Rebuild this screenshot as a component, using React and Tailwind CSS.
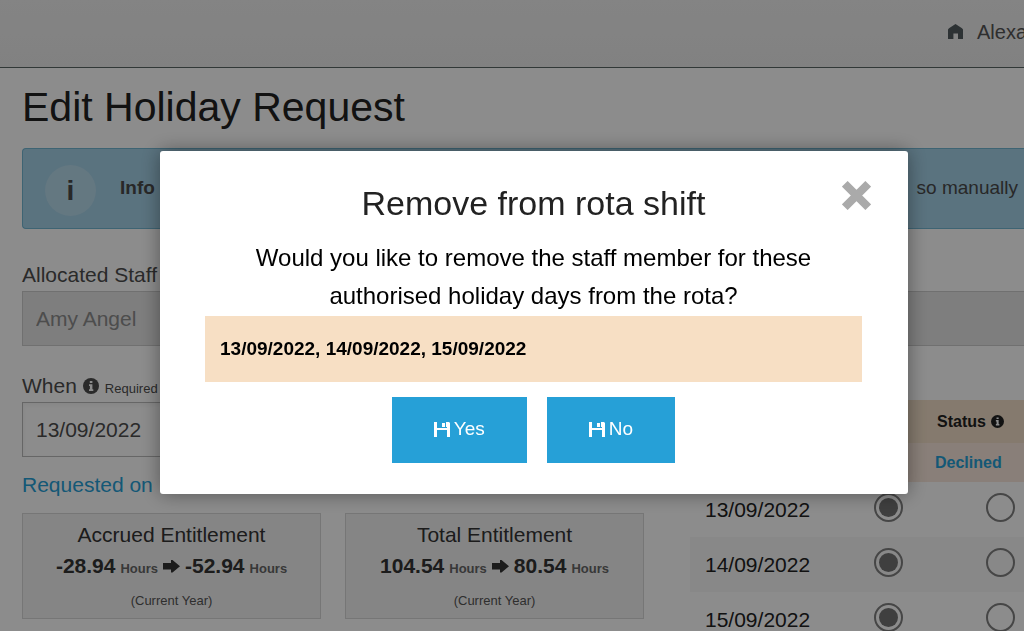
import React from "react";

const rotaDates = ["13/09/2022", "14/09/2022", "15/09/2022"];

const entitlements = [
  { title: "Accrued Entitlement", from: "-28.94", to: "-52.94" },
  { title: "Total Entitlement", from: "104.54", to: "80.54" },
];

function HomeIcon({ className }) {
  return (
    <svg viewBox="0 0 15 15" className={className} fill="currentColor" aria-hidden="true">
      <path d="M7.5 0 14 4.2l1 1.3V15h-5V9.4H5.4V15H0V5.5l1-1.3z" />
    </svg>
  );
}

function InfoIcon({ className }) {
  return (
    <svg viewBox="0 0 16 16" className={className} aria-hidden="true">
      <circle cx="8" cy="8" r="8" fill="currentColor" />
      <path d="M6.8 3h2.6v2H6.8zM6 6.2h3.4v5h.9V13H6v-1.8h.9V8H6z" fill="#fff" />
    </svg>
  );
}

function ArrowIcon({ className }) {
  return (
    <svg viewBox="0 0 17 13" className={className} fill="currentColor" aria-hidden="true">
      <path d="M0 3h8V0h1.5L17 6.2 9.5 12.5H8v-3H0z" />
    </svg>
  );
}

function SaveIcon({ className }) {
  return (
    <svg viewBox="0 0 16 15" className={className} fill="currentColor" aria-hidden="true">
      <path d="M0 0h3v6h10V5h-1V0h3l1 1v14h-3V8H3v7H0zM8 1h3v4H8z" />
    </svg>
  );
}

function CloseIcon({ className }) {
  return (
    <svg viewBox="0 0 29 29" className={className} stroke="currentColor" strokeWidth="8" aria-hidden="true">
      <path d="M2.8 2.8 26.2 26.2M26.2 2.8 2.8 26.2" />
    </svg>
  );
}

function EntitlementCard({ title, from, to }) {
  return (
    <div className="flex-1 h-[106px] pt-1 border border-[#d8d8d8] bg-[#f2f2f2] text-center text-[#333]">
      <h3 className="text-[21px] leading-[34px]">{title}</h3>
      <p className="flex items-baseline justify-center gap-[5px] text-[21px] leading-7 font-bold">
        {from} <small className="text-[13px] text-[#666]">Hours</small>
        <ArrowIcon className="h-[13px] w-[17px] shrink-0" />
        {to} <small className="text-[13px] text-[#666]">Hours</small>
      </p>
      <p className="mt-[10px] text-[13px] leading-4 text-[#555]">(Current Year)</p>
    </div>
  );
}

function StatusTable() {
  const radio =
    "block size-[29px] appearance-none rounded-full border-2 border-[#808080] p-[3px] bg-clip-content checked:bg-[#737373]";

  return (
    <table className="w-[346px] table-fixed border-collapse text-left">
      <colgroup>
        <col className="w-[122px]" />
        <col className="w-[112px]" />
        <col className="w-[112px]" />
      </colgroup>
      <thead className="text-base font-bold">
        <tr className="h-[43px] bg-[#f2dfc8] text-[#222]">
          <td />
          <td />
          <th className="pl-[13px]">
            <span className="flex items-center gap-[5px]">
              Status <InfoIcon className="size-[13px]" />
            </span>
          </th>
        </tr>
        <tr className="h-[39px] bg-[#fae8dc]">
          <td />
          <td />
          <th className="pl-[11px]">
            <a href="#declined" className="text-[#26a0d7]">Declined</a>
          </th>
        </tr>
      </thead>
      <tbody>
        {rotaDates.map((date) => (
          <tr key={date} className="h-[55px] even:bg-[#f7f7f7]">
            <td className="pl-[15px] text-[21px] text-[#222]">{date}</td>
            <td className="pl-[62px] pb-1">
              <input type="radio" name={date} defaultChecked aria-label={`${date} approved`} className={radio} />
            </td>
            <td className="pl-[62px] pb-1">
              <input type="radio" name={date} aria-label={`${date} declined`} className={radio} />
            </td>
          </tr>
        ))}
      </tbody>
    </table>
  );
}

function HolidayPage() {
  return (
    <div className="h-full overflow-hidden">
      <header className="flex h-[68px] items-center justify-end gap-[14px] overflow-hidden border-b border-[#5a6664] bg-linear-to-b from-[#f0f0f0] to-[#ececec] pb-1 text-xl text-[#555]">
        <HomeIcon className="size-[15px] text-[#525c60]" />
        <a href="#account" className="-mr-[3px]">Alexa</a>
      </header>

      <main className="pl-[22px]">
        <h1 className="flex h-20 items-center text-[41px] text-[#222]">Edit Holiday Request</h1>

        <div className="flex h-[81px] items-center rounded-l border border-r-0 border-[#72b6d2] bg-[#a4d1e7] pl-[22px] text-[19px] text-[#4a4a4a]">
          <span className="mt-1 flex size-[51px] items-center justify-center rounded-full bg-white/20 text-[28px] font-bold">i</span>
          <strong className="ml-6">Info</strong>
          <span className="ml-auto pr-[6px]">so manually</span>
        </div>

        <label htmlFor="staff" className="mt-[30px] block text-[21px] leading-8 text-[#4d4d4d]">Allocated Staff</label>
        <input
          id="staff"
          defaultValue="Amy Angel"
          disabled
          className="block h-[55px] w-full border border-r-0 border-[#ccc] bg-[#e5e5e5] px-[13px] text-[21px] text-[#8c8c8c]"
        />

        <div className="flex gap-[46px]">
          <section className="w-[622px] shrink-0">
            <label htmlFor="when" className="mt-6 flex h-8 items-baseline gap-[6px] text-[21px] leading-8 text-[#4d4d4d]">
              When
              <InfoIcon className="size-4 self-center" />
              <small className="text-[13px]">Required</small>
            </label>
            <input
              id="when"
              defaultValue="13/09/2022"
              className="block h-[55px] w-full border border-[#bbb] px-[13px] text-[21px] text-[#4d4d4d] shadow-inner"
            />
            <p className="py-3 text-[21px] leading-8 text-[#26a0d7]">Requested on</p>
            <div className="flex gap-6">
              {entitlements.map((item) => (
                <EntitlementCard key={item.title} {...item} />
              ))}
            </div>
          </section>

          <section className="min-w-0 flex-1 overflow-hidden pt-[54px]">
            <StatusTable />
          </section>
        </div>
      </main>
    </div>
  );
}

function RemoveShiftModal() {
  const button =
    "flex h-[66px] items-center justify-center gap-1 bg-[#26a0d7] px-[42px] pb-0.5 text-[19px] text-white";

  return (
    <div className="fixed inset-0 bg-black/45 pt-[151px] pr-[116px] pl-[160px]">
      <div
        role="dialog"
        aria-modal="true"
        aria-labelledby="modal-title"
        className="relative rounded-[3px] bg-white pt-6 pr-[46px] pb-[31px] pl-[45px] shadow-[0_0_20px_rgba(0,0,0,0.4)]"
      >
        <button aria-label="Close" className="absolute top-[30px] right-[37px] text-[#aaa]">
          <CloseIcon className="size-[29px]" />
        </button>
        <h2 id="modal-title" className="text-center text-[34px] leading-14 text-[#222]">Remove from rota shift</h2>
        <p className="mt-2 px-8 text-center text-2xl leading-[38px] text-black">
          Would you like to remove the staff member for these authorised holiday days from the rota?
        </p>
        <div className="mt-px flex h-[66px] items-center bg-[#f7dfc4] px-[15px] text-[19px] font-bold text-black">
          {rotaDates.join(", ")}
        </div>
        <div className="mt-[15px] flex justify-center gap-5">
          <button className={button}>
            <SaveIcon className="h-[15px] w-4" />
            Yes
          </button>
          <button className={button}>
            <SaveIcon className="h-[15px] w-4" />
            No
          </button>
        </div>
      </div>
    </div>
  );
}

export default function App() {
  return (
    <div className="h-screen bg-white font-['Liberation_Sans',Arial,sans-serif]">
      <HolidayPage />
      <RemoveShiftModal />
    </div>
  );
}
